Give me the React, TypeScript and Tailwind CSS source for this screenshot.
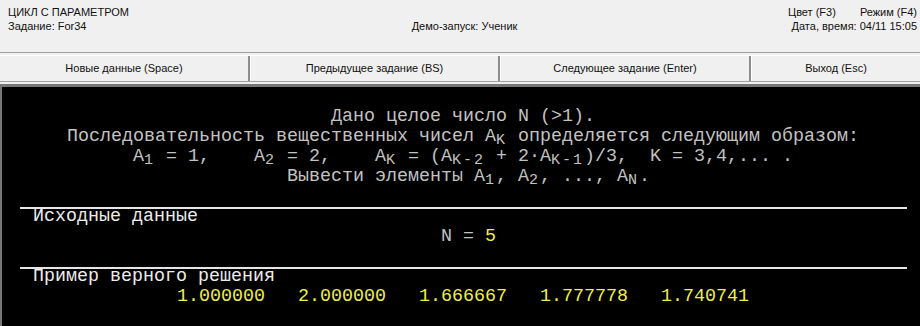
const mono = { fontFamily: '"Liberation Mono", "DejaVu Sans Mono", monospace' }

function Sub({ children }: { children: string }) {
  return <span className="inline-block leading-[12px] text-[15px] tracking-[2px] align-[-3px]">{children}</span>
}

function Row({ children, className = '' }: { children?: React.ReactNode; className?: string }) {
  return <div className={`h-[20px] leading-[20px] whitespace-pre ${className}`}>{children}</div>
}

const buttons = [
  { label: 'Новые данные (Space)', w: 'w-[250px]' },
  { label: 'Предыдущее задание (BS)', w: 'w-[250px]' },
  { label: 'Следующее задание (Enter)', w: 'w-[251px]' },
  { label: 'Выход (Esc)', w: 'flex-1' },
]

export default function App() {
  return (
    <div
      className="w-[920px] h-[326px] overflow-hidden bg-[#f0f0f0] flex flex-col"
      style={{ fontFamily: '"Liberation Sans", Arial, sans-serif' }}
    >
      {/* шапка */}
      <div className="h-[53px] shrink-0 border-b border-[#a0a0a0] flex text-[11px] leading-[14px] text-[#111] pt-[5px]">
        <div className="flex-1 pl-[8px]">
          <div>ЦИКЛ С ПАРАМЕТРОМ</div>
          <div>Задание: For34</div>
        </div>
        <div className="flex-1 text-center pt-[14px] pl-[4px]">Демо-запуск: Ученик</div>
        <div className="flex-1 pr-[3px] text-right">
          <div className="flex justify-end gap-[24px]">
            <span>Цвет (F3)</span>
            <span>Режим (F4)</span>
          </div>
          <div>Дата, время: 04/11 15:05</div>
        </div>
      </div>

      {/* кнопки */}
      <div className="mt-[2px] h-[27px] shrink-0 flex border-t border-t-white border-b border-b-[#a0a0a0] text-[11px] text-[#111]">
        {buttons.map((b, i) => (
          <div
            key={b.label}
            className={`${b.w} flex items-center justify-center ${i < 3 ? 'border-r-2 border-r-[#8c8c8c]' : ''} ${
              i > 0 ? 'border-l border-l-white' : ''
            }`}
          >
            {b.label}
          </div>
        ))}
      </div>

      {/* окно задания */}
      <div
        className="mt-[2px] flex-1 bg-black border-t-[3px] border-l-[2px] border-[#767676] text-[18.33px] text-[#c2c2c2]"
        style={mono}
      >
        <div className="pl-[21px]">
          <Row />
          <Row>{'                            Дано целое число N (>1).'}</Row>
          <Row>
            {'    Последовательность вещественных чисел A'}
            <Sub>K</Sub>
            {' определяется следующим образом:'}
          </Row>
          <Row>
            {'          A'}
            <Sub>1</Sub>
            {' = 1,    A'}
            <Sub>2</Sub>
            {' = 2,    A'}
            <Sub>K</Sub>
            {' = (A'}
            <Sub>K-2</Sub>
            {' + 2·A'}
            <Sub>K-1</Sub>
            {')/3,  K = 3,4,... .'}
          </Row>
          <Row>
            {'                        Вывести элементы A'}
            <Sub>1</Sub>
            {', A'}
            <Sub>2</Sub>
            {', ..., A'}
            <Sub>N</Sub>
            {'.'}
          </Row>
          <Row />
        </div>

        <div className="ml-[18px] w-[887px] h-[2px] bg-[#e6e6e6]" />
        <div className="pl-[21px] -mt-[2px]">
          <Row className="pl-[10px] text-[#ececec]">Исходные данные</Row>
          <Row>
            {'                                      N = '}
            <span className="text-[#eeee4c]">5</span>
          </Row>
          <Row />
        </div>

        <div className="ml-[18px] w-[887px] h-[2px] bg-[#e6e6e6]" />
        <div className="pl-[21px] -mt-[2px]">
          <Row className="pl-[10px] text-[#ececec]">Пример верного решения</Row>
          <Row className="text-[#eeee4c]">
            {'              1.000000   2.000000   1.666667   1.777778   1.740741'}
          </Row>
        </div>
      </div>
    </div>
  )
}
